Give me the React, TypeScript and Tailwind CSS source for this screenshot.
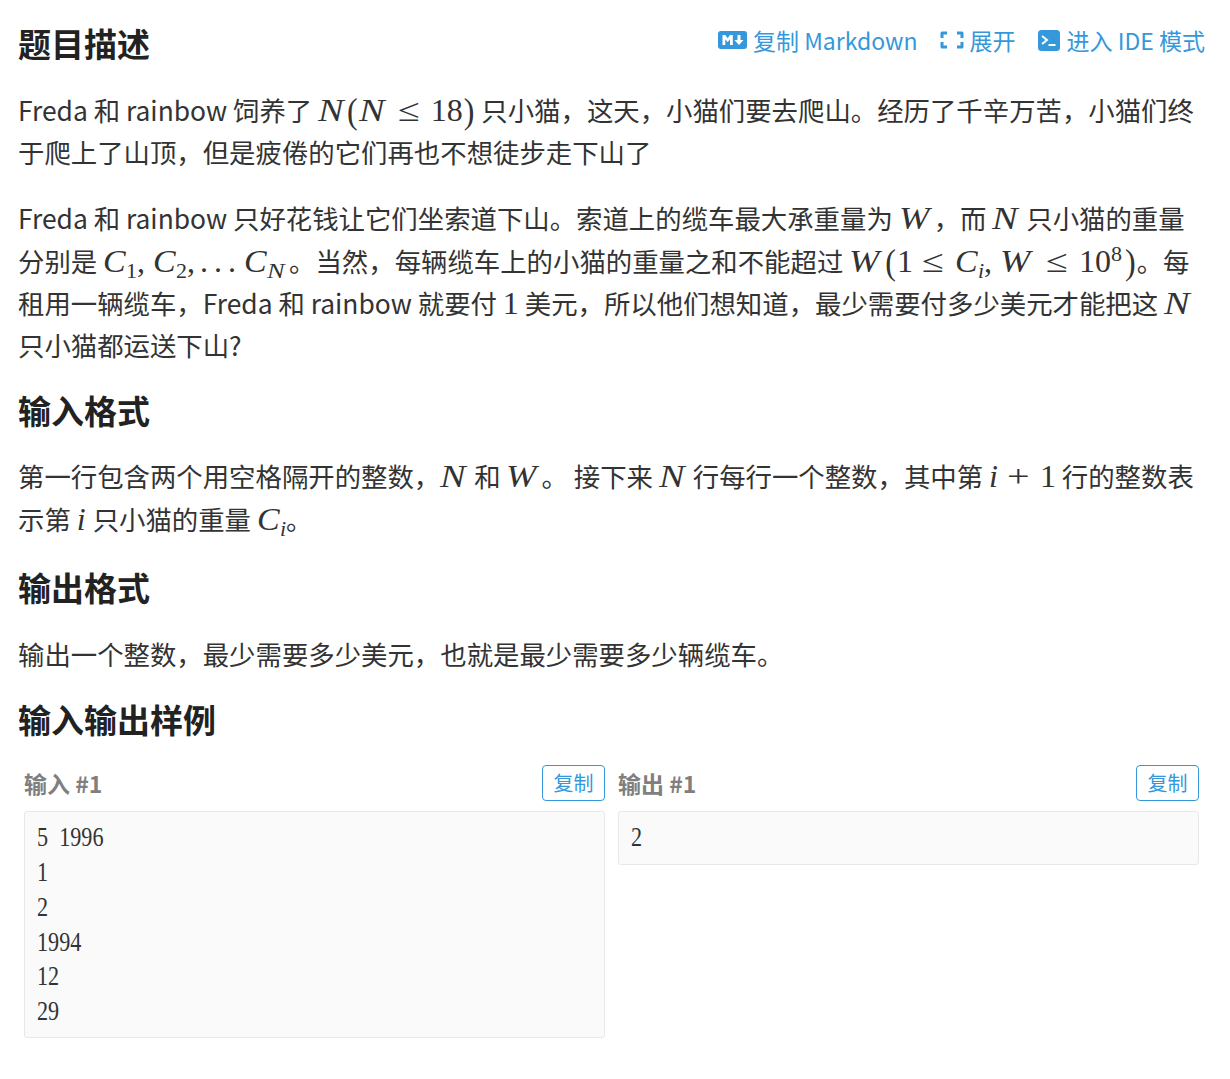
const sans = "font-['Noto_Sans_CJK_SC','Noto_Sans',sans-serif]";
const serif = "font-['Liberation_Serif',serif] text-[32px] leading-none";

// math glyphs: stretched a little towards the wider Computer Modern shapes
function N() {
  return <span className={`${serif} inline-block w-[28px] origin-left scale-x-[1.2] italic`}>N</span>;
}
function W() {
  return <span className={`${serif} inline-block w-[35px] origin-left scale-x-[1.14] italic`}>W</span>;
}
function C() {
  return <span className={`${serif} inline-block w-[23px] origin-left scale-x-[1.06] italic`}>C</span>;
}
function I() {
  return <span className={`${serif} inline-block w-[12px] italic`}>i</span>;
}
function R({ children }: { children: React.ReactNode }) {
  return <span className={serif}>{children}</span>;
}
function Paren({ children }: { children: React.ReactNode }) {
  return <span className={`${serif} mx-[1px] inline-block scale-y-[1.15]`}>{children}</span>;
}
function Op({ children }: { children: React.ReactNode }) {
  return <span className={`${serif} mx-[11px] inline-block w-[22px] origin-left scale-x-[1.25]`}>{children}</span>;
}
function Sub({ children, italic }: { children: React.ReactNode; italic?: boolean }) {
  return (
    <span className={`relative top-[6px] font-['Liberation_Serif',serif] text-[22px] leading-none ${italic ? "italic" : ""}`}>
      {children}
    </span>
  );
}

function Heading({ children, className }: { children: React.ReactNode; className?: string }) {
  return <h2 className={`text-[33px] font-bold leading-[44px] text-[#222] ${className ?? ""}`}>{children}</h2>;
}

function Sample({ title, lines }: { title: string; lines: string[] }) {
  return (
    <div className="min-w-0 flex-1">
      <div className="mb-[10px] flex h-[37px] items-center justify-between">
        <span className="text-[23px] font-bold text-[#7f7f7f]">{title}</span>
        <button className="h-9 w-[63px] self-end rounded-[4px] border border-[#3498db] text-[20px] leading-none text-[#3498db]">复制</button>
      </div>
      <pre className="min-h-[54px] rounded-[3px] border border-[#e8e8e8] bg-[#fafafa] px-3 py-2 text-[#333]">
        <code className="block origin-left scale-x-[0.84] font-['Liberation_Serif',serif] text-[26.4px] leading-[34.8px]">{lines.join("\n")}</code>
      </pre>
    </div>
  );
}

export default function App() {
  return (
    <main className={`${sans} h-[1079px] overflow-hidden bg-white pl-[18px] pr-[24px] pt-[21px] text-[26.4px] leading-[42.24px] text-[#333]`}>
      <div className="flex items-center justify-between">
        <Heading>题目描述</Heading>
        <div className="mb-[6px] mr-[1px] flex items-center gap-[22px] text-[23px] leading-none text-[#3498db]">
          <a className="flex items-center gap-[6px]">
            <svg width="29" height="18" viewBox="0 0 29 18" aria-hidden>
              <rect width="29" height="18" rx="3" fill="#3498db" />
              <path d="M4.500 14V4h2.800l2.400 3.200L12 4h2.800v10H12V8.200L9.700 11.200 7.300 8.200V14z" fill="#fff" />
              <path d="M19.500 4h3v5h3L21 14l-4.500-5h3z" fill="#fff" />
            </svg>
            复制 Markdown
          </a>
          <a className="flex items-center gap-[6px]">
            <svg width="24" height="20" viewBox="0 0 24 20" fill="none" stroke="#3498db" strokeWidth="3" strokeLinejoin="round" aria-hidden>
              <path d="M7 3H2v5M2 12v5h5M17 3h5v5M22 12v5h-5" />
            </svg>
            展开
          </a>
          <a className="flex items-center gap-[7px]">
            <svg width="22" height="21" viewBox="0 0 22 21" aria-hidden>
              <rect width="22" height="21" rx="3.500" fill="#3498db" />
              <path d="M4 6l5 4-5 4" fill="none" stroke="#fff" strokeWidth="2" />
              <path d="M10.500 15h7" stroke="#fff" strokeWidth="2" />
            </svg>
            进入 IDE 模式
          </a>
        </div>
      </div>

      <p className="mt-[24px] whitespace-nowrap">
        Freda 和 rainbow 饲养了 <N /><Paren>(</Paren><N /><Op>≤</Op><R>18</R><Paren>)</Paren> 只小猫，这天，小猫们要去爬山。经历了千辛万苦，小猫们终<br />
        于爬上了山顶，但是疲倦的它们再也不想徒步走下山了
      </p>
      <p className="mt-[24px] whitespace-nowrap">
        Freda 和 rainbow 只好花钱让它们坐索道下山。索道上的缆车最大承重量为 <W />，而 <N /> 只小猫的重量<br />
        分别是 <C /><Sub>1</Sub><R>, </R><C /><Sub>2</Sub><R>,</R><span className={`${serif} ml-[5px] tracking-[6px]`}>...</span><span className="ml-[2px]"><C /></span>
        <span className="relative top-[6px] inline-block w-[22px] origin-left scale-x-[1.2] font-['Liberation_Serif',serif] text-[22px] italic leading-none">N</span>。当然，每辆缆车上的小猫的重量之和不能超过 <W /><Paren>(</Paren><R>1</R><span className="ml-[-2px]"><Op>≤</Op></span><C /><Sub italic>i</Sub><span className={`${serif} mr-[8px]`}>,</span><W /><Op>≤</Op><R>10</R><span className="relative top-[-11px] font-['Liberation_Serif',serif] text-[22px] leading-none">8</span><span className="ml-[2px]"><Paren>)</Paren></span>。每<br />
        租用一辆缆车，Freda 和 rainbow 就要付 <R>1</R> 美元，所以他们想知道，最少需要付多少美元才能把这 <N /><br />
        只小猫都运送下山?
      </p>

      <Heading className="mt-[22px]">输入格式</Heading>
      <p className="mt-[23px] whitespace-nowrap">
        第一行包含两个用空格隔开的整数，<N /> 和 <W />。 接下来 <N /> 行每行一个整数，其中第 <I /> <span className="ml-[-11px]"><Op>+</Op></span><R>1</R> 行的整数表<br />
        示第 <I /> <span className="ml-[-2px]">只</span>小猫的重量 <C /><Sub italic>i</Sub>。
      </p>

      <Heading className="mt-[25px]">输出格式</Heading>
      <p className="mt-[24px] whitespace-nowrap">输出一个整数，最少需要多少美元，也就是最少需要多少辆缆车。</p>

      <Heading className="mt-[22px]">输入输出样例</Heading>
      <div className="mt-[23px] flex gap-[13px] pl-[6px] pr-[7px]">
        <Sample title="输入 #1" lines={["5  1996", "1", "2", "1994", "12", "29"]} />
        <Sample title="输出 #1" lines={["2"]} />
      </div>
    </main>
  );
}
